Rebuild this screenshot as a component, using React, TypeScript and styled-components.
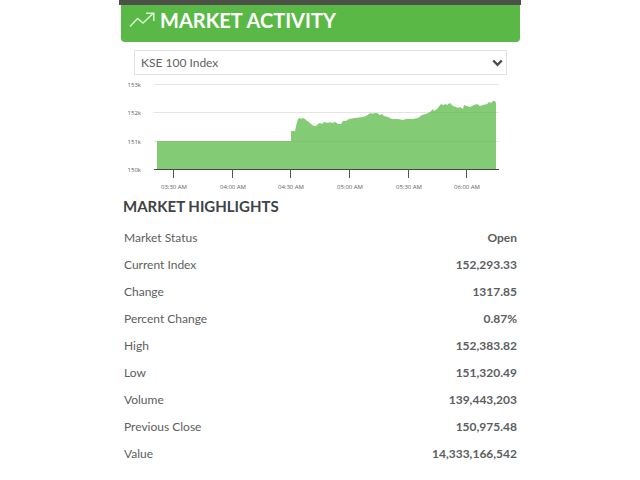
import React from "react";
import styled, { createGlobalStyle } from "styled-components";

const GlobalStyle = createGlobalStyle`
  * {
    box-sizing: border-box;
  }
  body {
    margin: 0;
    background: #ffffff;
    color: #5c5e60;
    font-family: Lato, "Open Sans", sans-serif;
  }
`;

const Panel = styled.main`
  max-width: 402px;
  margin: 0 auto;
`;

const TopStrip = styled.div`
  height: 5px;
  background: #4c5147;
`;

const Header = styled.header`
  display: flex;
  align-items: center;
  gap: 5px;
  margin: 0 1px 0 2px;
  padding: 0 8px 8px;
  height: 37px;
  border-radius: 0 0 4px 4px;
  background: #5ab946;
  color: #ffffff;
`;

const Title = styled.h1`
  margin: 0;
  font-size: 20px;
  line-height: 30px;
  font-weight: 700;
`;

const SelectBox = styled.div`
  display: grid;
  align-items: center;
  margin: 8px 14px 0 15px;
`;

const Select = styled.select`
  grid-area: 1 / 1;
  width: 100%;
  height: 25px;
  padding: 0 24px 0 6px;
  appearance: none;
  border: 1px solid #e2e2e2;
  border-radius: 0;
  background: #ffffff;
  color: #626466;
  font: 400 12px/20px Lato, sans-serif;
`;

const Chevron = styled.svg`
  grid-area: 1 / 1;
  justify-self: end;
  margin-right: 4px;
  pointer-events: none;
`;

const Chart = styled.svg`
  display: block;
  width: 100%;
  height: auto;
  margin-top: 1px;
`;

const AxisLabel = styled.text`
  fill: #606060;
  font: 400 6px "Open Sans", sans-serif;
`;

const Subtitle = styled.h2`
  margin: 2px 0 8px 4px;
  color: #404346;
  font-size: 15px;
  line-height: 20px;
  font-weight: 700;
`;

const Highlights = styled.table`
  width: 100%;
  border-collapse: collapse;
  font-size: 12px;
  line-height: 27px;
`;

const Label = styled.th`
  padding: 0 0 0 5px;
  text-align: left;
  font-weight: 400;
`;

const Value = styled.td`
  padding: 0 4px 0 0;
  text-align: right;
  font-weight: 700;
`;

const yTicks = [
  { label: "153k", y: 8 },
  { label: "152k", y: 36 },
  { label: "151k", y: 65 },
  { label: "150k", y: 93 },
];

const xTicks = [
  { label: "03:30 AM", x: 55 },
  { label: "04:00 AM", x: 114 },
  { label: "04:30 AM", x: 172 },
  { label: "05:00 AM", x: 231 },
  { label: "05:30 AM", x: 290 },
  { label: "06:00 AM", x: 348 },
];

const series =
  "38,93 38,65 172,65 172,55 176,55 177,50 179,43 181,42 182,43 184,42 186,43 188,45 190,46 192,48 195,50 197,50 199,48 201,47 203,48 205,46 209,47 211,46 213,47 216,46 218,47 219,48 222,48 224,45 227,45 230,43 236,42 244,41 247,40 250,38 252,37 254,38 255,37 258,37 261,39 263,38 265,40 269,41 273,43 279,43 284,44 287,43 294,43 299,42 303,39 307,38 311,36 314,33 315,35 318,33 322,28 324,29 327,28 328,29 331,27 334,30 337,31 339,32 341,31 344,33 345,29 351,31 355,29 358,28 361,30 364,29 368,28 370,26 372,27 374,25 376,25 377,27 377,93";

const rows = [
  ["Market Status", "Open"],
  ["Current Index", "152,293.33"],
  ["Change", "1317.85"],
  ["Percent Change", "0.87%"],
  ["High", "152,383.82"],
  ["Low", "151,320.49"],
  ["Volume", "139,443,203"],
  ["Previous Close", "150,975.48"],
  ["Value", "14,333,166,542"],
];

function TrendIcon() {
  return (
    <svg width="26" height="16" viewBox="0 0 26 16" fill="none" stroke="#d9f5d0" strokeWidth="1.5" aria-hidden="true">
      <path d="M1 14.5 8.5 6.5 14 11 24 1.5M17 1.2H24.8V9" />
    </svg>
  );
}

function IndexChart() {
  return (
    <Chart viewBox="0 0 402 118" role="img" aria-label="KSE 100 Index">
      {yTicks.map((t) => (
        <React.Fragment key={t.label}>
          <path d={`M35 ${t.y + 0.5}H380`} stroke="#e4e4e4" />
          <AxisLabel x="22" y={t.y + 3} textAnchor="end">{t.label}</AxisLabel>
        </React.Fragment>
      ))}
      <polygon points={series} fill="#5ab946" fillOpacity="0.75" />
      <path d="M35 93.5H380" stroke="#3f4a40" />
      {xTicks.map((t) => (
        <React.Fragment key={t.label}>
          <path d={`M${t.x - 0.5} 93V102`} stroke="#555555" />
          <AxisLabel x={t.x} y="113" textAnchor="middle">{t.label}</AxisLabel>
        </React.Fragment>
      ))}
    </Chart>
  );
}

export default function App() {
  return (
    <>
      <GlobalStyle />
      <Panel>
        <TopStrip />
        <Header>
          <TrendIcon />
          <Title>MARKET ACTIVITY</Title>
        </Header>
        <SelectBox>
          <Select aria-label="Index" defaultValue="KSE 100 Index">
            <option>KSE 100 Index</option>
          </Select>
          <Chevron width="11" height="8" viewBox="0 0 11 8" fill="none" stroke="#4a4a4a" strokeWidth="2.4" aria-hidden="true">
            <path d="M1.2 1.5 5.5 5.8 9.8 1.5" />
          </Chevron>
        </SelectBox>
        <IndexChart />
        <Subtitle>MARKET HIGHLIGHTS</Subtitle>
        <Highlights>
          <tbody>
            {rows.map(([label, value]) => (
              <tr key={label}>
                <Label scope="row">{label}</Label>
                <Value>{value}</Value>
              </tr>
            ))}
          </tbody>
        </Highlights>
      </Panel>
    </>
  );
}
